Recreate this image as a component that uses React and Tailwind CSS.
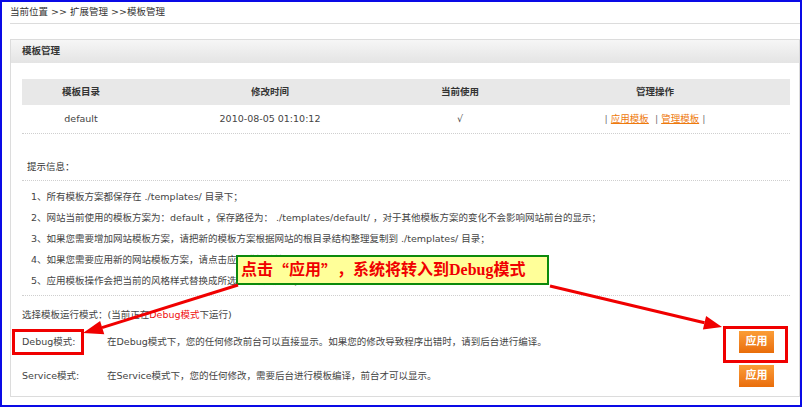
const tips = [
  <>1、所有模板方案都保存在 ./templates/ 目录下；</>,
  <>2、网站当前使用的模板方案为：default ，保存路径为： ./templates/default/ ，对于其他模板方案的变化不会影响网站前台的显示；</>,
  <>3、如果您需要增加网站模板方案，请把新的模板方案根据网站的根目录结构整理复制到 ./templates/ 目录；</>,
  <>4、如果您需要应用新的网站模板方案，请点击应用模板链接；</>,
  <>5、应用模板操作会把当前的风格样式替换成所选择的模板方案；</>,
];

const modes = [
  { name: 'Debug模式:', desc: '在Debug模式下，您的任何修改前台可以直接显示。如果您的修改导致程序出错时，请到后台进行编译。' },
  { name: 'Service模式:', desc: '在Service模式下，您的任何修改，需要后台进行模板编译，前台才可以显示。' },
];

const ApplyButton = () => (
  <button className="w-[35px] h-[22px] bg-gradient-to-b from-[#fb9d36] to-[#e96d08] text-white text-[11px] font-bold flex items-center justify-center">
    应用
  </button>
);

const cjk = { fontFamily: '"Noto Sans CJK SC", sans-serif' };

const App = () => {
  return (
    <div
      className="relative w-[802px] h-[407px] border-2 border-[#0a0ae6] bg-white overflow-hidden text-[9.5px] text-[#444]"
      style={{ fontFamily: '"DejaVu Sans", "Noto Sans CJK SC", sans-serif' }}
    >
      {/* breadcrumb */}
      <div className="ml-2 h-[22px] flex items-center border-b border-[#dcdcdc] text-[#333]">
        当前位置 &gt;&gt; 扩展管理 &gt;&gt;模板管理
      </div>

      {/* panel */}
      <div className="ml-2 mt-[15px] h-[358px] border border-[#dcdcdc]">
        <div className="h-[23px] flex items-center pl-[11px] bg-gradient-to-b from-[#f6f6f6] to-[#e4e4e4] font-bold text-[#333]">
          模板管理
        </div>

        <div className="ml-[11px] mr-[9px] mt-4">
          <div className="grid grid-cols-[118px_260px_120px_1fr] h-[26px] items-center bg-[#e8e8e8] font-bold text-[#333] text-center">
            <div>模板目录</div>
            <div>修改时间</div>
            <div>当前使用</div>
            <div>管理操作</div>
          </div>
          <div className="grid grid-cols-[118px_260px_120px_1fr] h-[29px] items-center text-center border-b border-dotted border-[#cfcfcf]">
            <div>default</div>
            <div>2010-08-05 01:10:12</div>
            <div>√</div>
            <div className="text-[#777]">
              | <a className="text-[#ee7a0e] underline">应用模板</a> &nbsp;| <a className="text-[#ee7a0e] underline">管理模板</a> |
            </div>
          </div>

          <div className="mt-[21px] h-[26px] flex items-center pl-[5px] border-b border-dotted border-[#cfcfcf] text-[#333]">
            提示信息：
          </div>
          <ul className="pt-[5px] pb-[4px] pl-[9px] border-b border-dotted border-[#cfcfcf]">
            {tips.map((t, i) => (
              <li key={i} className="h-[21px] leading-[21px]">{t}</li>
            ))}
          </ul>

          <div className="mt-[9px] h-[20px] flex items-center">
            选择模板运行模式：(当前正在<span className="text-[#f01010]">Debug模式</span>下运行)
          </div>
          {modes.map((m) => (
            <div key={m.name} className="h-[34px] flex items-center">
              <div className="w-[85px]">{m.name}</div>
              <div className="flex-1">{m.desc}</div>
              <div className="mr-[16px]">
                <ApplyButton />
              </div>
            </div>
          ))}
        </div>
      </div>

      {/* annotations */}
      <div
        className="absolute left-[234px] top-[253px] w-[313px] h-[30px] border-2 border-[#0c8a0c] bg-[#ffff99] flex items-center pl-[3px] text-[16px] font-bold text-[#f00000] whitespace-nowrap"
        style={{ fontFamily: '"Liberation Serif", "Noto Sans CJK SC", serif' }}
      >
        点击<span style={cjk}>“</span>应用 <span style={cjk}>”</span>，系统将转入到Debug模式
      </div>
      <div className="absolute left-[10px] top-[327px] w-[72px] h-[26px] border-[3px] border-[#f00000]" />
      <div className="absolute left-[721px] top-[324px] w-[65px] h-[37px] border-[3px] border-[#f00000]" />
      <svg className="absolute left-0 top-0 pointer-events-none" width="802" height="407">
        <line x1="236" y1="283" x2="100" y2="325.6" stroke="#f00000" strokeWidth="3" />
        <polygon points="81,331 102.3,332.3 98.1,318.9" fill="#f00000" />
        <line x1="548" y1="284" x2="702.5" y2="320.8" stroke="#f00000" strokeWidth="3" />
        <polygon points="720,325 700.9,327.6 704.1,314" fill="#f00000" />
      </svg>
    </div>
  );
};

export default App;
